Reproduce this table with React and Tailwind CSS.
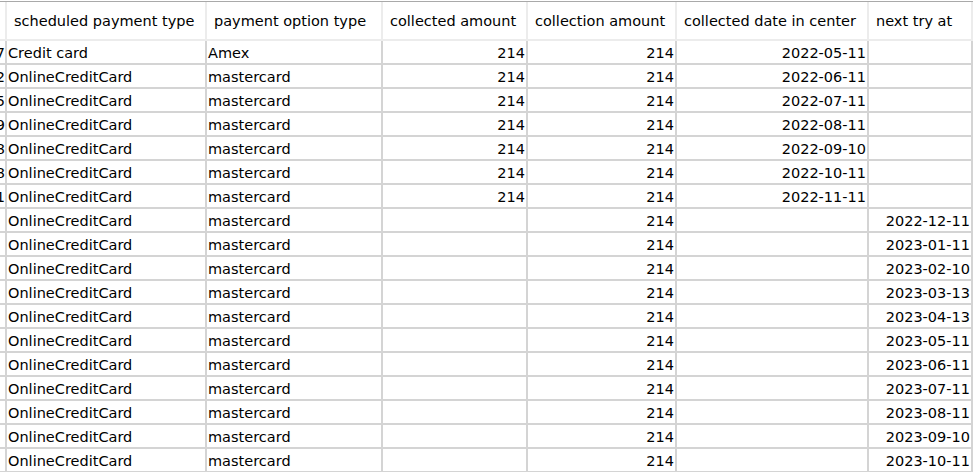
import React from 'react';

const COLS = [
  { key: 'pre', w: 'w-[7px]', align: 'right' },
  { key: 'type', w: 'w-[200px]', align: 'left', label: 'scheduled payment type' },
  { key: 'option', w: 'w-[176px]', align: 'left', label: 'payment option type' },
  { key: 'collected', w: 'w-[145px]', align: 'right', label: 'collected amount' },
  { key: 'collection', w: 'w-[149px]', align: 'right', label: 'collection amount' },
  { key: 'date', w: 'w-[192px]', align: 'right', label: 'collected date in center' },
  { key: 'next', w: 'w-[104px]', align: 'right', label: 'next try at' },
  { key: 'more', w: 'w-[120px]', align: 'left' },
];

const done = [
  ['12317', 'Credit card', 'Amex', '2022-05-11'],
  ['12322', 'OnlineCreditCard', 'mastercard', '2022-06-11'],
  ['12325', 'OnlineCreditCard', 'mastercard', '2022-07-11'],
  ['12329', 'OnlineCreditCard', 'mastercard', '2022-08-11'],
  ['12338', 'OnlineCreditCard', 'mastercard', '2022-09-10'],
  ['12348', 'OnlineCreditCard', 'mastercard', '2022-10-11'],
  ['12351', 'OnlineCreditCard', 'mastercard', '2022-11-11'],
];

const upcoming = [
  '2022-12-11', '2023-01-11', '2023-02-10', '2023-03-13', '2023-04-13', '2023-05-11',
  '2023-06-11', '2023-07-11', '2023-08-11', '2023-09-10', '2023-10-11',
];

const rows = [
  ...done.map(([pre, type, option, date]) => ({
    pre, type, option, collected: '214', collection: '214', date, next: '', more: '2022-05-11',
  })),
  ...upcoming.map(next => ({
    pre: '', type: 'OnlineCreditCard', option: 'mastercard', collected: '', collection: '214', date: '', next, more: '2022-12-11',
  })),
];

function Cell({ col, children }) {
  const pad = col.key === 'pre' ? 'justify-end' : col.align === 'right' ? 'justify-end pr-[1px]' : 'justify-start pl-[1px]';
  return (
    <div className={`${col.w} shrink-0 h-[24px] border-r-2 border-b-2 border-[#d4d4d4] overflow-hidden flex items-center whitespace-nowrap ${pad}`}>
      <span className="leading-[22px] pt-[1px]">{children}</span>
    </div>
  );
}

export default function App() {
  return (
    <div className="w-[973px] h-[472px] overflow-hidden bg-white text-black text-[14.5px]"
      style={{ fontFamily: '"DejaVu Sans", sans-serif' }}>
      <div className="w-[1200px] pt-[1px]">
        {/* Header */}
        <div className="flex border-t border-[#a9a9a9]">
          {COLS.map(c => (
            <div key={c.key}
              className={`${c.w} shrink-0 h-[39px] border-r-2 border-b-2 border-[#ececec] flex items-center whitespace-nowrap overflow-hidden pt-[3px] ${c.label ? 'pl-[7px]' : ''}`}>
              {c.label || ''}
            </div>
          ))}
        </div>

        {/* Body */}
        {rows.map((r, i) => (
          <div key={i} className="flex">
            {COLS.map(c => (
              <Cell key={c.key} col={c}>{r[c.key]}</Cell>
            ))}
          </div>
        ))}
      </div>
    </div>
  );
}
